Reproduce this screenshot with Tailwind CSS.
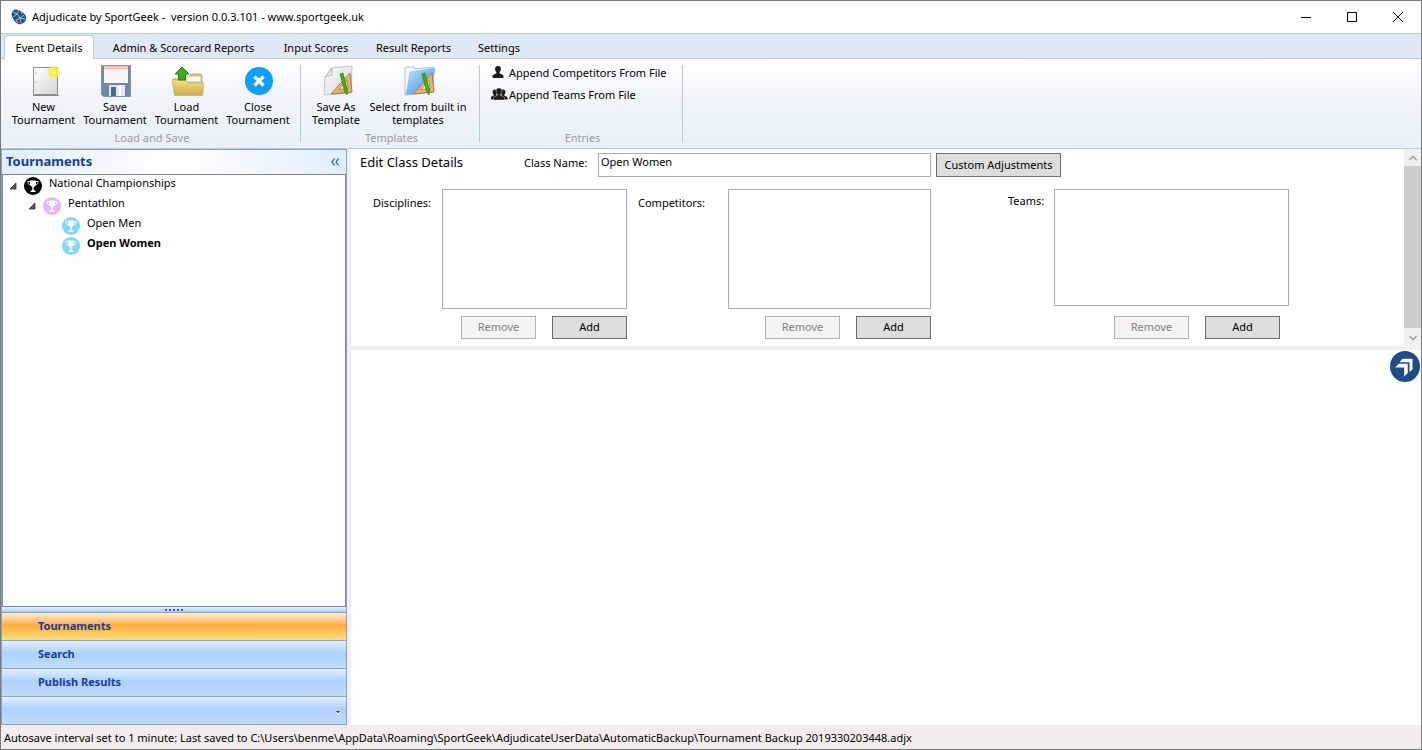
<!DOCTYPE html>
<html lang="en">

<head>
    <meta charset="UTF-8">
    <meta name="viewport" content="width=device-width, initial-scale=1.0">
    <title>Adjudicate by SportGeek</title>
    <script src="https://cdn.jsdelivr.net/npm/@tailwindcss/browser@4"></script>
</head>

<body class="h-screen overflow-hidden flex flex-col border border-[#7a7a7a] bg-white text-black text-[11px] leading-[13px] font-['Noto_Sans','Open_Sans',sans-serif]">

    <!-- Shared shapes -->
    <svg class="absolute size-0" aria-hidden="true">
        <defs>
            <linearGradient id="paper" x1="0" y1="0" x2="1" y2="1">
                <stop offset="0" stop-color="#fff" />
                <stop offset="1" stop-color="#d4d4d4" />
            </linearGradient>
            <linearGradient id="folder" x1="0" y1="0" x2="0" y2="1">
                <stop offset="0" stop-color="#f3df90" />
                <stop offset="1" stop-color="#cda845" />
            </linearGradient>
            <linearGradient id="blue" x1="0" y1="0" x2="1" y2="1">
                <stop offset="0" stop-color="#c4e7ff" />
                <stop offset="1" stop-color="#2f86e6" />
            </linearGradient>
            <radialGradient id="glow">
                <stop offset="0" stop-color="#ffffc8" />
                <stop offset=".3" stop-color="#fff04a" />
                <stop offset=".7" stop-color="#f8ee30" stop-opacity=".8" />
                <stop offset="1" stop-color="#fff68a" stop-opacity="0" />
            </radialGradient>
            <symbol id="cup" viewBox="0 0 18 18">
                <circle cx="9" cy="9" r="9" fill="currentColor" />
                <path d="M6 4.500H3.700q.1 3.400 2.900 3.800M12 4.500h2.300q-.1 3.400-2.900 3.800" fill="none" stroke="#fff" stroke-width=".8" />
                <path d="M6 3.500h6v3.500q-.3 2.400-2.300 3v2.700l1.900 1.300v1H6.400v-1l1.900-1.300V10q-2-.6-2.300-3z" fill="#fff" />
            </symbol>
            <symbol id="ruler" viewBox="0 0 24 25">
                <path d="M1 23 20 2l2 19z" fill="#e9b06c" stroke="#b9773a" stroke-width="1" />
                <path d="M9 18.500 17 9.500l1 8z" fill="#f1f3f5" stroke="#b9773a" stroke-width=".8" />
                <path d="M10 3l3-1 4.500 17-.5 5-2.500-4z" fill="#35b512" stroke="#1c7d0c" stroke-width=".6" />
            </symbol>
            <symbol id="person" viewBox="0 0 12 12">
                <path d="M6 0c2.200 0 3.100 1.400 2.900 3.200C8.800 4.700 8.200 5.500 7.600 6v1.200c.8.900 3.600 1.200 3.900 2.500V12H.5V9.700C.8 8.400 3.600 8.100 4.400 7.200V6C3.800 5.500 3.200 4.700 3.100 3.200 2.900 1.400 3.800 0 6 0z" fill="#1c1c1c" />
            </symbol>
        </defs>
    </svg>

    <!-- Title bar -->
    <header class="h-8 shrink-0 flex items-center">
        <svg class="w-4 h-4 ml-[10px]" viewBox="0 0 16 16">
            <path d="M4 .5Q6 0 9 1.500q4 2 5.500 5Q16 9 14.500 12q-2 3-6 3.500Q5.500 15 3.500 12 .5 8 .5 5 1 1.500 4 .5z" fill="#1f5288" />
            <path d="M2 3l4 2 2-4M6 5l-4 3M6 5l3 4 4-3M9 9l-4 2M9 9l1 5M10 2l1 3M5 11l2 3M9 9l5 1" fill="none" stroke="#b4cde6" stroke-width=".9" />
        </svg>
        <h1 class="ml-[5px] pb-[2px] whitespace-pre">Adjudicate by SportGeek -  version 0.0.3.101 - www.sportgeek.uk</h1>
        <div class="ml-auto flex h-full">
            <button aria-label="Minimize" class="w-[46px] flex items-center justify-center">
                <svg class="w-[10px] h-[10px]" viewBox="0 0 10 10" stroke="#000"><path d="M0 5.500h10" /></svg>
            </button>
            <button aria-label="Maximize" class="w-[46px] flex items-center justify-center">
                <svg class="w-[10px] h-[10px]" viewBox="0 0 10 10" stroke="#000" fill="none"><path d="M.5.500h9v9h-9z" /></svg>
            </button>
            <button aria-label="Close" class="w-[46px] flex items-center justify-center">
                <svg class="w-[10px] h-[10px]" viewBox="0 0 10 10" stroke="#000"><path d="M0 0l10 10M10 0 0 10" /></svg>
            </button>
        </div>
    </header>

    <!-- Ribbon tabs -->
    <nav class="h-[26px] shrink-0 flex items-end bg-[#dfe9f5] border-y border-[#b9c9e0] pl-[3px] whitespace-nowrap">
        <button class="w-[90px] h-6 -mb-px mr-[3px] rounded-t-sm border border-b-0 border-[#b9c9e0] bg-white">Event Details</button>
        <button class="w-[173px] h-6 pt-[3px]">Admin &amp; Scorecard Reports</button>
        <button class="w-[92px] h-6 pt-[3px]">Input Scores</button>
        <button class="w-[103px] h-6 pt-[3px]">Result Reports</button>
        <button class="w-[68px] h-6 pt-[3px]">Settings</button>
    </nav>

    <!-- Ribbon -->
    <section class="h-[90px] shrink-0 flex py-[6px] bg-linear-to-b from-white via-[#eff4fb] to-[#e9f0f9] border-b border-[#b9c9e0] whitespace-nowrap">
        <div class="w-[300px] flex flex-col justify-between border-r border-[#b9c9e0] pl-[7px] pr-1">
            <div class="flex">
                <button class="w-[71px] flex flex-col items-center">
                    <svg class="w-8 h-8 mb-[3px] ml-1" viewBox="0 0 32 32">
                        <path d="M3.500 2.500h24v27h-24z" fill="url(#paper)" stroke="#8f8f8f" />
                        <path d="M3 30.500h26" stroke="#8a8a8a" />
                        <path d="M6 7v2M6 16v2M6 25v1" stroke="#bbb" />
                        <circle cx="24" cy="7" r="7" fill="url(#glow)" />
                    </svg>
                    New<br>Tournament
                </button>
                <button class="w-[72px] flex flex-col items-center">
                    <svg class="w-8 h-8 mb-[3px] ml-[2px]" viewBox="0 0 32 32">
                        <path d="M1.500.500h29v31h-27l-2-2z" fill="#7188a4" stroke="#8397ae" />
                        <path d="M4 1h24v17H4z" fill="#fbf6f3" />
                        <path d="M4 1h24v3H4z" fill="#f5b9a9" />
                        <path d="M4 2.500h24" stroke="#fbd9cf" />
                        <path d="M9 20h16v11H9z" fill="#e4e6e9" />
                        <path d="M11 22h5v9h-5z" fill="#4f6884" />
                        <path d="M19 20h2v11h-2z" fill="#fff" />
                    </svg>
                    Save<br>Tournament
                </button>
                <button class="w-[71px] flex flex-col items-center">
                    <svg class="w-8 h-8 mb-[3px] ml-[3px]" viewBox="0 0 32 32">
                        <path d="M17 12l2-3h10l1 2v8H1v-5h16z" fill="#e3c768" stroke="#c9a850" />
                        <path d="M14 11h15v6H14z" fill="#f8f8f8" stroke="#bbb" />
                        <path d="M0 15h13l3 3h16l-1.500 12.500h-28z" fill="url(#folder)" stroke="#c9a850" stroke-width=".6" />
                        <path d="M10 2l7 7h-3.500v6h-7V9H3z" fill="#3fae14" stroke="#2b7d10" />
                    </svg>
                    Load<br>Tournament
                </button>
                <button class="w-[72px] flex flex-col items-center">
                    <svg class="w-8 h-8 mb-[3px] ml-[2px]" viewBox="0 0 32 32">
                        <circle cx="16" cy="16" r="14" fill="#0aa0fb" />
                        <path d="M11.500 11.500l9 9M20.500 11.500l-9 9" stroke="#fff" stroke-width="3.400" />
                    </svg>
                    Close<br>Tournament
                </button>
            </div>
            <p class="text-center text-[#9a9da2] h-[11px] leading-[13px]">Load and Save</p>
        </div>
        <div class="w-[179px] flex flex-col justify-between border-r border-[#b9c9e0] pl-[7px] pr-1">
            <div class="flex">
                <button class="w-[56px] flex flex-col items-center">
                    <svg class="w-8 h-8 mb-[3px] ml-1" viewBox="0 0 32 32">
                        <path d="M10 3l20-2-1 27-27 2 1-18z" fill="url(#paper)" stroke="#c2c2c2" />
                        <path d="M10 3v7l-7 2z" fill="#e4e4e4" stroke="#aaa" stroke-width=".7" />
                        <use href="#ruler" x="8" y="6" width="24" height="25" />
                    </svg>
                    Save As<br>Template
                </button>
                <button class="w-[108px] flex flex-col items-center">
                    <svg class="w-8 h-8 mb-[3px] ml-1" viewBox="0 0 32 32">
                        <path d="M1 3l2-1h7l1 2 19-2-1 25-28 3z" fill="#f6f9fc" stroke="#b5c2cf" />
                        <path d="M6 7l25-4-4 24-25 3z" fill="url(#blue)" stroke="#8fc0ea" stroke-width=".7" />
                        <use href="#ruler" x="8" y="6" width="24" height="25" />
                    </svg>
                    Select from built in<br>templates
                </button>
            </div>
            <p class="text-center text-[#9a9da2] h-[11px] leading-[13px]">Templates</p>
        </div>
        <div class="w-[203px] flex flex-col justify-between border-r border-[#b9c9e0] pl-[11px] pr-2">
            <div class="flex flex-col -mt-1">
                <button class="h-[22px] flex items-center">
                    <svg class="w-[18px] h-3" viewBox="0 0 18 12"><use href="#person" x="1" width="12" height="12" /></svg>
                    Append Competitors From File
                </button>
                <button class="h-[22px] flex items-center">
                    <svg class="w-[18px] h-3" viewBox="0 0 18 12">
                        <use href="#person" x="-1" y="1" width="10" height="11" />
                        <use href="#person" x="7" y="1" width="10" height="11" />
                        <use href="#person" x="2" width="12" height="12" stroke="#eef3fb" stroke-width=".4" />
                    </svg>
                    Append Teams From File
                </button>
            </div>
            <p class="text-center text-[#9a9da2] h-[11px] leading-[13px]">Entries</p>
        </div>
    </section>

    <main class="flex-1 min-h-0 flex bg-[#f0f0f0]">

        <!-- Navigation pane -->
        <aside class="w-[346px] shrink-0 flex flex-col border border-[#8aa5b5] mr-1 text-[#15409a]">
            <div class="h-6 shrink-0 flex items-center justify-between pl-1 pr-[7px] bg-linear-to-r from-[#e1eeff] via-white to-[#e1eeff]">
                <h2 class="text-[13px] font-bold pb-px">Tournaments</h2>
                <button aria-label="Collapse">
                    <svg class="w-2 h-2" viewBox="0 0 8 8" fill="none" stroke="#2b50a4" stroke-width="1.200"><path d="M3.500.500 1 4l2.500 3.500M7.500.500 5 4l2.500 3.500" /></svg>
                </button>
            </div>
            <ul class="flex-1 bg-white border border-[#828790] text-black" role="tree">
                <li class="h-5 flex pl-[6px]">
                    <svg class="w-2 h-2 mt-[7px] mr-[7px]" viewBox="0 0 8 8"><path d="M7 1v6H1z" fill="#595959" stroke="#333" stroke-width=".8" /></svg>
                    <svg class="w-[18px] h-[18px] mt-[2px] mr-[7px] text-black"><use href="#cup" /></svg>
                    <span class="leading-4">National Championships</span>
                </li>
                <li class="h-5 flex pl-[25px]">
                    <svg class="w-2 h-2 mt-[7px] mr-[7px]" viewBox="0 0 8 8"><path d="M7 1v6H1z" fill="#595959" stroke="#333" stroke-width=".8" /></svg>
                    <svg class="w-[18px] h-[18px] mt-[2px] mr-[7px] text-[#e4b5fb]"><use href="#cup" /></svg>
                    <span class="leading-4">Pentathlon</span>
                </li>
                <li class="h-5 flex pl-[59px]">
                    <svg class="w-[18px] h-[18px] mt-[2px] mr-[7px] text-[#86d4fd]"><use href="#cup" /></svg>
                    <span class="leading-4">Open Men</span>
                </li>
                <li class="h-5 flex pl-[59px]">
                    <svg class="w-[18px] h-[18px] mt-[2px] mr-[7px] text-[#86d4fd]"><use href="#cup" /></svg>
                    <span class="leading-4 font-bold">Open Women</span>
                </li>
            </ul>
            <div class="h-[5px] shrink-0 flex items-center justify-center gap-[2px] bg-linear-to-b from-[#e1eeff] to-[#acd0ff]">
                <i class="size-[2px] bg-[#3a5fae]"></i><i class="size-[2px] bg-[#3a5fae]"></i><i class="size-[2px] bg-[#3a5fae]"></i><i class="size-[2px] bg-[#3a5fae]"></i><i class="size-[2px] bg-[#3a5fae]"></i>
            </div>
            <button class="h-7 shrink-0 border-t border-[#8aa5b5] pl-9 pb-[2px] text-left font-bold bg-linear-to-b from-[#ffefd2] from-0% via-[#ffab3f] via-45% to-[#ffdf79]">Tournaments</button>
            <button class="h-7 shrink-0 border-t border-[#8aa5b5] pl-9 pb-[2px] text-left font-bold bg-linear-to-b from-[#e1eeff] from-0% via-[#add1ff] via-45% to-[#c0dbff]">Search</button>
            <button class="h-7 shrink-0 border-t border-[#8aa5b5] pl-9 pb-[2px] text-left font-bold bg-linear-to-b from-[#e1eeff] from-0% via-[#add1ff] via-45% to-[#c0dbff]">Publish Results</button>
            <button aria-label="More" class="h-7 shrink-0 border-t border-[#8aa5b5] pr-[5px] pt-1 flex items-center justify-end bg-linear-to-b from-[#e1eeff] from-0% via-[#add1ff] via-45% to-[#c0dbff]">
                <svg class="w-[6px] h-[5px]" viewBox="0 0 6 5"><path d="M0 2h6L3 5z" fill="#fff" /><path d="M1 1h4L3 3.500z" fill="#15409a" /></svg>
            </button>
        </aside>

        <div class="flex-1 min-w-0 flex flex-col">

            <!-- Class editor -->
            <section class="h-[197px] shrink-0 flex bg-white">
                <form class="flex-1 min-w-0 overflow-hidden pt-1 pl-[9px]">
                    <div class="flex">
                        <h2 class="w-[164px] text-[13px] leading-[18px]">Edit Class Details</h2>
                        <label for="className" class="w-[74px] leading-5">Class Name:</label>
                        <input id="className" type="text" value="Open Women" class="w-[333px] h-6 border border-[#abadb3] pl-[2px] pb-[8px] mr-[5px]">
                        <button type="button" class="w-[125px] h-6 pb-[2px] bg-[#ddd] border border-[#707070]">Custom Adjustments</button>
                    </div>
                    <div class="flex items-start mt-3 pl-[13px]">
                        <label for="disciplines" class="w-[69px] leading-7">Disciplines:</label>
                        <div class="w-[185px] mr-[11px]">
                            <select id="disciplines" multiple class="block w-full h-[120px] mb-[7px] bg-white border border-[#abadb3]"></select>
                            <div class="flex justify-end gap-4">
                                <button type="button" disabled class="w-[75px] h-[23px] pb-[2px] bg-[#f4f4f4] border border-[#adb2b5] text-[#838383]">Remove</button>
                                <button type="button" class="w-[75px] h-[23px] pb-[2px] bg-[#ddd] border border-[#707070]">Add</button>
                            </div>
                        </div>
                        <label for="competitors" class="w-[90px] leading-7">Competitors:</label>
                        <div class="w-[203px] mr-[77px]">
                            <select id="competitors" multiple class="block w-full h-[120px] mb-[7px] bg-white border border-[#abadb3]"></select>
                            <div class="flex justify-end gap-4">
                                <button type="button" disabled class="w-[75px] h-[23px] pb-[2px] bg-[#f4f4f4] border border-[#adb2b5] text-[#838383]">Remove</button>
                                <button type="button" class="w-[75px] h-[23px] pb-[2px] bg-[#ddd] border border-[#707070]">Add</button>
                            </div>
                        </div>
                        <label for="teams" class="w-[46px] leading-6">Teams:</label>
                        <div class="w-[235px]">
                            <select id="teams" multiple class="block w-full h-[117px] mb-[10px] bg-white border border-[#abadb3]"></select>
                            <div class="flex justify-end gap-4 pr-[9px]">
                                <button type="button" disabled class="w-[75px] h-[23px] pb-[2px] bg-[#f4f4f4] border border-[#adb2b5] text-[#838383]">Remove</button>
                                <button type="button" class="w-[75px] h-[23px] pb-[2px] bg-[#ddd] border border-[#707070]">Add</button>
                            </div>
                        </div>
                    </div>
                </form>
                <div class="w-[17px] flex flex-col bg-[#f0f0f0]">
                    <button aria-label="Scroll up" class="h-[17px] flex items-center justify-center">
                        <svg class="w-2 h-[6px]" viewBox="0 0 8 6" fill="none" stroke="#9a9a9a" stroke-width="1.300"><path d="M.5 5 4 1.200 7.500 5" /></svg>
                    </button>
                    <div class="flex-1 bg-[#cdcdcd]"></div>
                    <button aria-label="Scroll down" class="h-[18px] pt-[2px] flex items-center justify-center">
                        <svg class="w-2 h-[6px]" viewBox="0 0 8 6" fill="none" stroke="#9a9a9a" stroke-width="1.300"><path d="M.5 1 4 4.800 7.500 1" /></svg>
                    </button>
                </div>
            </section>

            <section class="flex-1 mt-1 flex items-start justify-end bg-white pr-px pt-px">
                <button aria-label="Expand">
                    <svg class="w-[30px] h-[31px]" viewBox="0 0 30 31">
                        <ellipse cx="15" cy="15.500" rx="15" ry="15.500" fill="#1f4b87" />
                        <path d="M9.500 11.200 12.500 7.800h10v10.400l-3 3v-10z" fill="#fff" />
                        <path d="M5 16.400 8.700 12.800h9v9.400L14.200 25.500v-9.100z" fill="#fff" />
                    </svg>
                </button>
            </section>
        </div>
    </main>

    <footer class="h-6 shrink-0 flex items-center pl-[3px] bg-[#f1edec] whitespace-nowrap">Autosave interval set to 1 minute: Last saved to C:\Users\benme\AppData\Roaming\SportGeek\AdjudicateUserData\AutomaticBackup\Tournament Backup 2019330203448.adjx</footer>

</body>

</html>
